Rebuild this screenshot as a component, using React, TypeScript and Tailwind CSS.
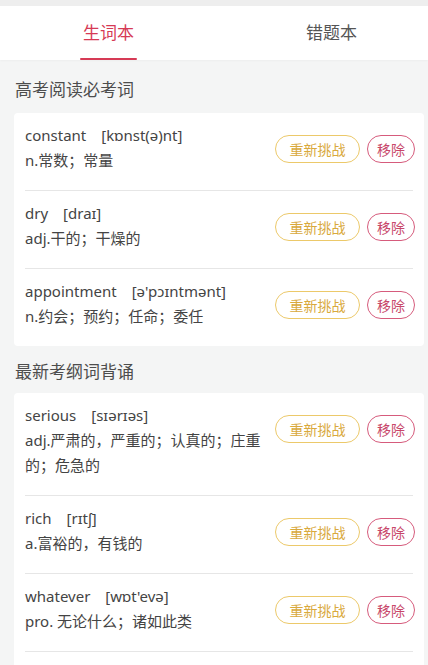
type Word = {
  word: string;
  phonetic: string;
  meaning: string;
};

const sections: { title: string; words: Word[] }[] = [
  {
    title: "高考阅读必考词",
    words: [
      { word: "constant", phonetic: "[kɒnst(ə)nt]", meaning: "n.常数；常量" },
      { word: "dry", phonetic: "[draɪ]", meaning: "adj.干的；干燥的" },
      { word: "appointment", phonetic: "[ə'pɔɪntmənt]", meaning: "n.约会；预约；任命；委任" },
    ],
  },
  {
    title: "最新考纲词背诵",
    words: [
      { word: "serious", phonetic: "[sɪərɪəs]", meaning: "adj.严肃的，严重的；认真的；庄重的；危急的" },
      { word: "rich", phonetic: "[rɪtʃ]", meaning: "a.富裕的，有钱的" },
      { word: "whatever", phonetic: "[wɒt'evə]", meaning: "pro. 无论什么；诸如此类" },
    ],
  },
];

function WordRow({ item, last }: { item: Word; last: boolean }) {
  return (
    <div className={"mx-[11px] " + (last ? "" : "border-b border-[#e6e6e6]")}>
      <div className="flex items-start">
        <div className="flex-1 pt-[10px] pb-[17px] pr-[10px] text-[15px] leading-[25px] text-[#444444]">
          <div>
            {item.word}
            <span className="ml-[15px]">{item.phonetic}</span>
          </div>
          <div className="max-w-[236px]">{item.meaning}</div>
        </div>
        <div className="mt-[22px] mr-[-2px] flex gap-[7px] text-[14px]">
          <button className="h-[28px] w-[85px] rounded-full border-[1.5px] border-[#ecc96a] text-[#d9a93c]">
            重新挑战
          </button>
          <button className="h-[28px] w-[48px] rounded-full border-[1.5px] border-[#d65b7c] text-[#c8476b]">
            移除
          </button>
        </div>
      </div>
    </div>
  );
}

export default function App() {
  return (
    <div
      className="w-[428px] h-[665px] overflow-hidden bg-[#f4f5f5]"
      style={{ fontFamily: '"Noto Sans", "Noto Sans CJK SC", sans-serif' }}
    >
      <div className="h-[6px] bg-[#eeeeee]" />
      <div className="h-[54px] bg-white flex pl-[80px] shadow-[0_1px_2px_rgba(0,0,0,0.03)]">
        <div className="w-[57px] flex flex-col items-center">
          <span className="mt-[16px] text-[17px] leading-[22px] text-[#d63a55]">生词本</span>
          <div className="mt-[14px] h-[3px] w-[57px] rounded-full bg-[#d63a55]" />
        </div>
        <div className="ml-[166px] w-[57px] flex flex-col items-center">
          <span className="mt-[16px] text-[17px] leading-[22px] text-[#555555]">错题本</span>
        </div>
      </div>

      {sections.map((s, si) => (
        <div key={s.title}>
          <div
            className={
              "pl-[15px] text-[17px] leading-[22px] text-[#4d4d4d] " +
              (si === 0 ? "pt-[19px] pb-[12px]" : "pt-[15px] pb-[10px]")
            }
          >
            {s.title}
          </div>
          <div className={"ml-[14px] mr-[4px] bg-white rounded-[4px] " + (si === 1 ? "pb-[30px]" : "")}>
            {s.words.map((w, i) => (
              <WordRow key={w.word} item={w} last={si === 0 && i === s.words.length - 1} />
            ))}
          </div>
        </div>
      ))}
    </div>
  );
}
